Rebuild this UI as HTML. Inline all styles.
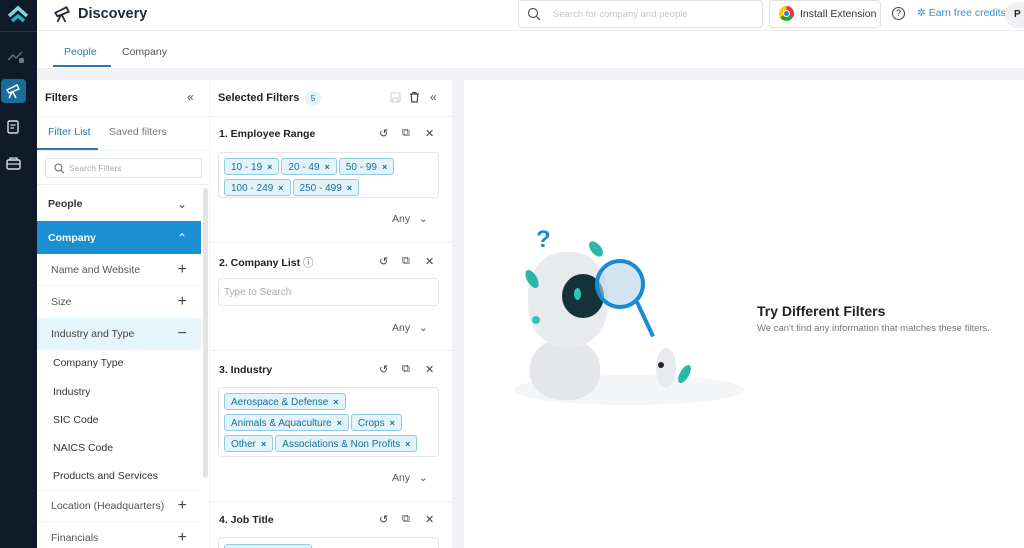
<!DOCTYPE html>
<html style="width:1024px;height:548px;overflow:hidden"><head><meta charset="utf-8"><style>
*{box-sizing:border-box;margin:0;padding:0}
body{width:1024px;height:548px;overflow:hidden;font-family:"Liberation Sans",sans-serif;background:#f0f2f5;position:relative;color:#222}
.a{position:absolute}
.side{left:0;top:0;width:37px;height:548px;background:#0f1b2a}
.top{left:37px;top:0;width:987px;height:31px;background:#fff;border-bottom:1px solid #eceef1}
.tabs{left:37px;top:31px;width:987px;height:37px;background:#fff}
.p1{left:37px;top:80px;width:172px;height:468px;background:#fff;overflow:hidden}
.p2{left:210px;top:80px;width:242px;height:468px;background:#fff;overflow:hidden}
.p3{left:464px;top:80px;width:560px;height:468px;background:#fff}
.row{position:absolute;left:0;width:164px;font-size:10.5px;color:#555;padding-left:14px;display:flex;align-items:center}
.row .pl{position:absolute;right:14px;font-size:16px;color:#444;font-weight:300}
.sub{position:absolute;left:16px;font-size:10.5px;color:#333}
.chip{display:inline-block;background:#e3f3fa;border:1px solid #8fcbe4;color:#1a6f96;font-size:10px;border-radius:3px;padding:2px 6px;margin:0 2px 3px 0;height:17px;line-height:12px}
.chip b{font-size:9px;margin-left:5px}
.ttl{position:absolute;left:9px;font-size:10.5px;font-weight:bold;color:#222}
.ic{position:absolute;font-size:11px;color:#444}
.box{position:absolute;left:8px;width:221px;border:1px solid #e2e5e9;border-radius:4px;padding:4px 4px 1px 5px}
.any{position:absolute;left:182px;font-size:10.5px;color:#555}
.sep{position:absolute;left:0;width:242px;height:1px;background:#edf0f3}
</style></head><body>
<div class="a side">
 <svg class="a" style="left:6px;top:4px" width="24" height="20" viewBox="0 0 24 20"><path d="M3 12 L12 4 L21 12" stroke="#7fd8dc" stroke-width="3.5" fill="none"/><path d="M6 17 L12 12 L18 17" stroke="#2bb1b8" stroke-width="3.5" fill="none"/></svg>
 <div class="a" style="left:0;top:31px;width:37px;height:1px;background:#2a3645"></div>
 <svg class="a" style="left:7px;top:50px" width="18" height="14"><path d="M1 10 L6 5 L9 8 L15 2" stroke="#6b7785" stroke-width="1.3" fill="none"/><rect x="12" y="8" width="5" height="5" rx="1" fill="#6b7785"/></svg>
 <div class="a" style="left:1px;top:79px;width:25px;height:24px;background:#1c6c9a;border-radius:4px"></div>
 <svg class="a" style="left:5px;top:83px" width="16" height="16" viewBox="0 0 16 16"><path d="M2 7 L12 2 L14 6 L4 10 Z" fill="none" stroke="#fff" stroke-width="1.4"/><path d="M7 9 L4 15 M8 9 L11 15" stroke="#fff" stroke-width="1.4"/></svg>
 <svg class="a" style="left:7px;top:120px" width="13" height="14"><rect x="1" y="1" width="10" height="12" rx="1.5" fill="none" stroke="#dde" stroke-width="1.4"/><path d="M3.5 5 H8.5 M3.5 8 H7" stroke="#dde" stroke-width="1.2"/></svg>
 <svg class="a" style="left:6px;top:156px" width="15" height="14"><path d="M4 4 V2 H11 V4" fill="none" stroke="#dde" stroke-width="1.3"/><rect x="1" y="4" width="13" height="9" rx="1.5" fill="none" stroke="#dde" stroke-width="1.4"/><path d="M1 8 H14" stroke="#dde" stroke-width="1.2"/></svg>
</div>
<div class="a top">
 <svg class="a" style="left:16px;top:5px" width="18" height="18" viewBox="0 0 16 16"><path d="M2 7 L12 2 L14 6 L4 10 Z" fill="none" stroke="#1f2a37" stroke-width="1.6"/><path d="M7 9 L4 15 M8 9 L11 15" stroke="#1f2a37" stroke-width="1.6"/></svg>
 <div class="a" style="left:41px;top:6px;font-size:14.5px;font-weight:bold;color:#1f2a37">Discovery</div>
 <div class="a" style="left:481px;top:0;width:245px;height:28px;border:1px solid #dfe2e6;border-radius:4px"></div>
 <svg class="a" style="left:490px;top:7px" width="14" height="14"><circle cx="6" cy="6" r="4.5" stroke="#555" stroke-width="1.2" fill="none"/><path d="M9.5 9.5 L13 13" stroke="#555" stroke-width="1.2"/></svg>
 <div class="a" style="left:516px;top:9px;font-size:9.5px;color:#c4c7cc">Search for company and people</div>
 <div class="a" style="left:732px;top:0;width:112px;height:28px;border:1px solid #dfe2e6;border-radius:4px"></div>
 <div class="a" style="left:742px;top:6px;width:15px;height:15px;border-radius:50%;background:conic-gradient(#e33 0 120deg,#2a2 120deg 240deg,#fc0 240deg)"></div>
 <div class="a" style="left:746px;top:10px;width:7px;height:7px;border-radius:50%;background:#3a7be0;border:1px solid #fff"></div>
 <div class="a" style="left:763px;top:8px;font-size:10.5px;color:#333">Install Extension</div>
 <div class="a" style="left:855px;top:7px;width:13px;height:13px;border:1.2px solid #444;border-radius:50%;font-size:9px;text-align:center;line-height:11px">?</div>
 <div class="a" style="left:880px;top:7px;font-size:10.5px;color:#3a8fd0">✲ Earn free credits</div>
 <div class="a" style="left:968px;top:2px;width:30px;height:26px;border-radius:13px;background:#eef0f2;font-size:10px;font-weight:bold;padding:7px 0 0 9px">P</div>
</div>
<div class="a tabs">
 <div class="a" style="left:27px;top:15px;font-size:10.5px;color:#2b7aa8">People</div>
 <div class="a" style="left:16px;top:34px;width:58px;height:2px;background:#2b7aa8"></div>
 <div class="a" style="left:85px;top:15px;font-size:10.5px;color:#555">Company</div>
</div>
<div class="a p1">
 <div class="a" style="left:8px;top:12px;font-size:11px;font-weight:bold">Filters</div>
 <div class="a" style="left:150px;top:10px;font-size:12px;color:#555">«</div>
 <div class="a" style="left:0;top:36px;width:172px;height:1px;background:#edf0f3"></div>
 <div class="a" style="left:11px;top:46px;font-size:10.5px;color:#2b7aa8">Filter List</div>
 <div class="a" style="left:72px;top:46px;font-size:10.5px;color:#777">Saved filters</div>
 <div class="a" style="left:0;top:68px;width:61px;height:2px;background:#2b7aa8"></div>
 <div class="a" style="left:0;top:70px;width:172px;height:1px;background:#edf0f3"></div>
 <div class="a" style="left:8px;top:78px;width:157px;height:20px;border:1px solid #dfe2e6;border-radius:3px"></div>
 <svg class="a" style="left:17px;top:83px" width="11" height="11"><circle cx="4.5" cy="4.5" r="3.5" stroke="#666" fill="none"/><path d="M7 7 L10 10" stroke="#666"/></svg>
 <div class="a" style="left:32px;top:83px;font-size:8.5px;color:#aaa">Search Filters</div>
 <div class="a" style="left:0;top:104px;width:172px;height:1px;background:#edf0f3"></div>
 <div class="a" style="left:166px;top:108px;width:5px;height:290px;background:#e2e4e7;border-radius:3px"></div>
 <div class="row" style="top:107px;height:33px;font-weight:bold;color:#333;padding-left:11px">People<span class="pl" style="font-size:12px">⌄</span></div>
 <div class="row" style="top:141px;height:33px;background:#1a90d2;color:#fff;font-weight:bold;padding-left:11px">Company<span class="pl" style="color:#fff;font-size:12px">⌃</span></div>
 <div class="row" style="top:174px;height:32px;border-bottom:1px solid #eef0f2">Name and Website<span class="pl">+</span></div>
 <div class="row" style="top:206px;height:32px">Size<span class="pl">+</span></div>
 <div class="row" style="top:238px;height:32px;background:#e6f4fb;color:#444">Industry and Type<span class="pl">−</span></div>
 <div class="sub" style="top:277px">Company Type</div>
 <div class="sub" style="top:306px">Industry</div>
 <div class="sub" style="top:334px">SIC Code</div>
 <div class="sub" style="top:362px">NAICS Code</div>
 <div class="sub" style="top:390px">Products and Services</div>
 <div class="row" style="top:410px;height:32px;border-top:1px solid #eef0f2;border-bottom:1px solid #eef0f2">Location (Headquarters)<span class="pl">+</span></div>
 <div class="row" style="top:442px;height:32px">Financials<span class="pl">+</span></div>
</div>
<div class="a p2">
 <div class="a" style="left:8px;top:12px;font-size:11px;font-weight:bold">Selected Filters</div>
 <div class="a" style="left:95px;top:11px;width:16px;height:14px;border-radius:7px;background:#e3f3fa;font-size:8.5px;color:#2b7aa8;text-align:center;line-height:14px">5</div>
 <svg class="a" style="left:180px;top:12px" width="11" height="11"><rect x="1" y="1" width="9" height="9" rx="1" fill="none" stroke="#ccc"/><rect x="3" y="6" width="5" height="4" fill="none" stroke="#ccc"/></svg>
 <svg class="a" style="left:199px;top:11px" width="11" height="12"><path d="M1 3 H10 M4 3 V1.5 H7 V3" stroke="#444" stroke-width="1.2" fill="none"/><path d="M2.2 3 L2.8 11 H8.2 L8.8 3" stroke="#444" stroke-width="1.2" fill="none"/></svg>
 <div class="a" style="left:220px;top:10px;font-size:12px;color:#555">«</div>
 <div class="sep" style="top:36px"></div>
 <div class="ttl" style="top:48px">1. Employee Range</div>
 <div class="ic" style="left:169px;top:47px">↺</div><div class="ic" style="left:192px;top:47px">⧉</div><div class="ic" style="left:215px;top:47px">✕</div>
 <div class="box" style="top:72px;height:46px"><span class="chip">10 - 19<b>×</b></span><span class="chip">20 - 49<b>×</b></span><span class="chip">50 - 99<b>×</b></span><span class="chip">100 - 249<b>×</b></span><span class="chip">250 - 499<b>×</b></span></div>
 <div class="any" style="top:133px">Any &nbsp;&nbsp;⌄</div>
 <div class="sep" style="top:162px"></div>
 <div class="ttl" style="top:175px">2. Company List <span style="font-weight:normal;color:#666">ⓘ</span></div>
 <div class="ic" style="left:169px;top:175px">↺</div><div class="ic" style="left:192px;top:175px">⧉</div><div class="ic" style="left:215px;top:175px">✕</div>
 <div class="box" style="top:198px;height:28px;font-size:10px;color:#aaa;padding-top:8px">Type to Search</div>
 <div class="any" style="top:242px">Any &nbsp;&nbsp;⌄</div>
 <div class="sep" style="top:270px"></div>
 <div class="ttl" style="top:284px">3. Industry</div>
 <div class="ic" style="left:169px;top:283px">↺</div><div class="ic" style="left:192px;top:283px">⧉</div><div class="ic" style="left:215px;top:283px">✕</div>
 <div class="box" style="top:307px;height:70px;overflow:hidden"><span class="chip">Aerospace &amp; Defense<b>×</b></span><br><span class="chip">Animals &amp; Aquaculture<b>×</b></span><span class="chip">Crops<b>×</b></span><br><span class="chip">Other<b>×</b></span><span class="chip">Associations &amp; Non Profits<b>×</b></span><br><span class="chip">Wholesale Trade<b>×</b></span></div>
 <div class="any" style="top:392px">Any &nbsp;&nbsp;⌄</div>
 <div class="sep" style="top:421px"></div>
 <div class="ttl" style="top:434px">4. Job Title</div>
 <div class="ic" style="left:169px;top:433px">↺</div><div class="ic" style="left:192px;top:433px">⧉</div><div class="ic" style="left:215px;top:433px">✕</div>
 <div class="box" style="top:457px;height:30px"><span class="chip" style="width:88px">&nbsp;</span></div>
</div>
<div class="a p3">
 <div class="a" style="left:50px;top:295px;width:230px;height:30px;border-radius:50%;background:#f4f5f7"></div>
 <div class="a" style="left:72px;top:146px;font-size:24px;font-weight:bold;color:#1a8ad2">?</div>
 <div class="a" style="left:66px;top:260px;width:70px;height:60px;border-radius:45%;background:#e4e6ea"></div>
 <div class="a" style="left:64px;top:172px;width:80px;height:95px;border-radius:45%;background:#e8eaed"></div>
 <div class="a" style="left:63px;top:189px;width:10px;height:20px;border-radius:50%;background:#2bb6a6;transform:rotate(-30deg)"></div>
 <div class="a" style="left:127px;top:160px;width:10px;height:18px;border-radius:50%;background:#2bb6a6;transform:rotate(-40deg)"></div>
 <div class="a" style="left:98px;top:194px;width:42px;height:44px;border-radius:50%;background:#143238"></div>
 <div class="a" style="left:110px;top:208px;width:7px;height:12px;border-radius:50%;background:#2bc6b6"></div>
 <div class="a" style="left:131px;top:179px;width:50px;height:50px;border-radius:50%;border:4px solid #1a8ad2;background:rgba(180,215,235,.6)"></div>
 <div class="a" style="left:171px;top:222px;width:4px;height:38px;background:#1a8ad2;transform:rotate(-25deg);transform-origin:top"></div>
 <div class="a" style="left:68px;top:236px;width:8px;height:8px;border-radius:50%;background:#2bc6b6"></div>
 <div class="a" style="left:192px;top:268px;width:20px;height:40px;border-radius:50%;background:#e8eaed"></div>
 <div class="a" style="left:194px;top:282px;width:6px;height:6px;border-radius:50%;background:#222"></div>
 <div class="a" style="left:216px;top:284px;width:9px;height:20px;border-radius:50%;background:#2bb6a6;transform:rotate(30deg)"></div>
 <div class="a" style="left:293px;top:223px;font-size:14px;font-weight:bold;color:#222">Try Different Filters</div>
 <div class="a" style="left:293px;top:243px;font-size:9.5px;color:#777">We can't find any information that matches these filters.</div>
</div>
</body></html>
